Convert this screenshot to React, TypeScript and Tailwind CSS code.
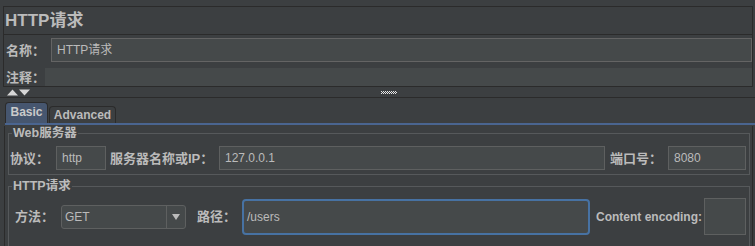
import React from "react";

const Arrows = () => (
  <svg width="24" height="7" viewBox="0 0 24 7">
    <path d="M0 6.5 L5.5 0.5 L11 6.5 Z" fill="#d6d6d6" />
    <path d="M12 0.5 L23 0.5 L17.5 6.5 Z" fill="#d6d6d6" />
  </svg>
);

// small dotted grip in the middle of the splitter
const Grip = () => (
  <svg width="16" height="4" viewBox="0 0 16 4">
    {Array.from({ length: 8 }).map((_, i) => (
      <React.Fragment key={i}>
        <rect x={i * 2} y={0} width="1" height="1" fill="#e6e6e6" />
        <rect x={i * 2 + 1} y={1} width="1" height="1" fill="#e6e6e6" />
        <rect x={i * 2} y={2} width="1" height="1" fill="#e6e6e6" />
      </React.Fragment>
    ))}
  </svg>
);

const Field = ({ w, value }: { w: string; value: string }) => (
  <div className={`flex h-[24px] items-center border border-[#5e6060] bg-[#45494a] pl-[5px] text-[12px] ${w}`}>
    {value}
  </div>
);

const App = () => {
  return (
    <div className="h-[246px] w-[755px] overflow-hidden bg-[#3c3f41] font-[Liberation_Sans,Noto_Sans_CJK_SC,sans-serif] text-[#bbbbbb]">
      {/* title + name / comment */}
      <div className="ml-[3px] mt-[6px] w-[750px] border-l border-r border-t border-[#2b2b2b]">
        <div className="flex h-[27px] items-center pl-[1px] text-[17px] font-bold leading-none">HTTP请求</div>
        <div className="border-b border-t border-[#2b2b2b]">
          <div className="flex items-center pt-[3px]">
            <span className="w-[47px] pl-[2px] text-[13px] font-bold leading-none">名称：</span>
            <div className="flex h-[24px] flex-1 items-center border border-[#646464] bg-[#45494a] pl-[5px] text-[12px]">
              HTTP请求
            </div>
          </div>
          <div className="mt-[6px] flex h-[18px] items-center">
            <span className="w-[41px] pl-[2px] text-[13px] font-bold leading-none">注释：</span>
            <div className="h-full flex-1 bg-[#45494a]" />
          </div>
        </div>
      </div>

      {/* splitter */}
      <div className="flex h-[11px] items-start border-b border-[#2b2b2b] pl-[7px] pt-[2px]">
        <Arrows />
        <div className="ml-[350px] mt-[2px]">
          <Grip />
        </div>
      </div>

      {/* tabs */}
      <div className="flex items-end pl-[5px] pt-[4px]">
        <div className="flex h-[21px] w-[43px] items-center justify-center rounded-t-[4px] border border-b-0 border-[#2b2b2b] bg-[#46566f] pb-[2px] text-[12px] font-bold text-[#cacaca]">
          Basic
        </div>
        <div className="ml-[1px] flex h-[17px] w-[67px] items-center justify-center rounded-t-[4px] border border-b-0 border-[#2b2b2b] text-[12px] font-bold">
          Advanced
        </div>
      </div>
      <div className="ml-[5px] h-[2px] bg-[#4a6590]" />

      {/* tab content */}
      <div className="ml-[4px] h-[130px] w-[749px] border-l border-r border-[#2b2b2b] pl-[3px] pr-[2px]">
        <fieldset className="mt-[1px] border border-[#56595b]">
          <legend className="ml-[3px] px-[1px] text-[12.5px] font-bold leading-[14px]">Web服务器</legend>
          <div className="mb-[4px] mt-[6px] flex items-center">
            <span className="w-[47px] pl-[1px] text-[13px] font-bold leading-none">协议：</span>
            <Field w="w-[50px]" value="http" />
            <span className="ml-[4px] w-[109px] text-[13px] font-bold leading-none">服务器名称或IP：</span>
            <Field w="w-[386px]" value="127.0.0.1" />
            <span className="ml-[5px] w-[58px] text-[13px] font-bold leading-none">端口号：</span>
            <Field w="w-[78px]" value="8080" />
          </div>
        </fieldset>

        <fieldset className="mt-[4px] h-[80px] border border-[#56595b]">
          <legend className="ml-[3px] px-[1px] text-[12.5px] font-bold leading-[14px]">HTTP请求</legend>
          <div className="mt-[5px] flex items-center">
            <span className="w-[52px] pl-[6px] text-[13px] font-bold leading-none">方法：</span>
            <div className="flex h-[24px] w-[125px] items-center rounded-[3px] border border-[#5e6060] bg-[#45494a] text-[12px]">
              <span className="flex-1 pl-[3px]">GET</span>
              <div className="flex h-full w-[19px] items-center justify-center border-l border-[#5e6060]">
                <svg width="8" height="6" viewBox="0 0 8 6">
                  <path d="M0 0 L8 0 L4 6 Z" fill="#bbbbbb" />
                </svg>
              </div>
            </div>
            <span className="ml-[11px] w-[45px] text-[13px] font-bold leading-none">路径：</span>
            <div className="flex h-[36px] w-[348px] items-center rounded-[4px] border-2 border-[#4772a3] bg-[#45494a] pl-[3px] text-[12px]">
              /users
            </div>
            <span className="ml-[6px] w-[108px] text-[12px] font-bold leading-none">Content encoding:</span>
            <div className="h-[37px] w-[42px] border border-[#5e6060] bg-[#45494a]" />
          </div>
        </fieldset>
      </div>
    </div>
  );
};

export default App;
